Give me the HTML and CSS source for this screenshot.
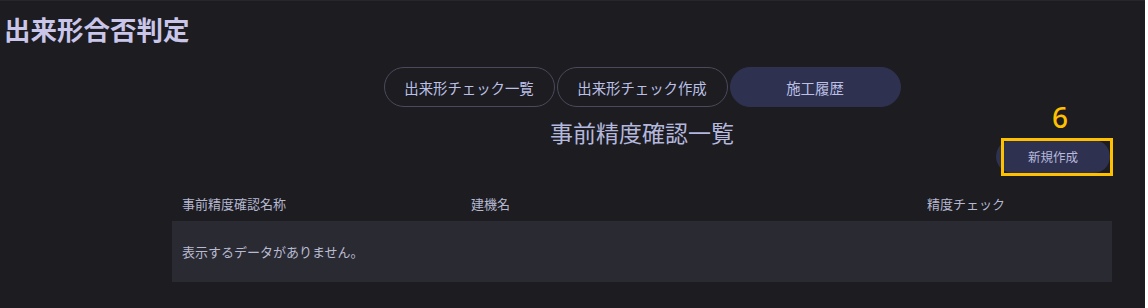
FILE: index.html
```html
<!DOCTYPE html>
<html lang="ja">
<head>
    <meta charset="UTF-8">
    <meta name="viewport" content="width=device-width, initial-scale=1.0">
    <title>出来形合否判定</title>
    <link rel="stylesheet" href="styles.css">
</head>
<body>
    <div class="app">
        <h1 class="page-title">出来形合否判定</h1>

        <div class="content">
            <div class="tabs">
                <button type="button" class="tab">出来形チェック一覧</button>
                <button type="button" class="tab">出来形チェック作成</button>
                <button type="button" class="tab active">施工履歴</button>
            </div>

            <div class="toolbar">
                <div></div>
                <h2 class="section-title">事前精度確認一覧</h2>
                <div class="toolbar-right">
                    <div class="new-wrap">
                        <span class="mark-num">6</span>
                        <button type="button" class="new-button">新規作成</button>
                        <span class="mark-box"></span>
                    </div>
                </div>
            </div>

            <table class="list">
                <thead>
                    <tr>
                        <th class="col-name">事前精度確認名称</th>
                        <th class="col-machine">建機名</th>
                        <th class="col-check">精度チェック</th>
                    </tr>
                </thead>
                <tbody>
                    <tr class="empty">
                        <td colspan="3">表示するデータがありません。</td>
                    </tr>
                </tbody>
            </table>
        </div>
    </div>
</body>
</html>
```

FILE: styles.css
```css
body {
    margin: 0;
    padding: 0;
    background-color: #ffffff;
    font-family: "Noto Sans CJK JP", "Noto Sans", sans-serif;
}
.app {
    width: 1145px;
    height: 308px;
    box-sizing: border-box;
    background-color: #1c1c21;
    border-top: 1px solid #26262c;
    padding-top: 13px;
    overflow: hidden;
}
.page-title {
    margin: 0 0 0 4px;
    font-size: 26.5px;
    line-height: 30px;
    font-weight: bold;
    color: #c9c6ea;
}
.content {
    margin-left: 172px;
    width: 940px;
}
.tabs {
    display: flex;
    justify-content: center;
    gap: 2px;
    margin-top: 23px;
}
.tab {
    width: 171px;
    height: 40px;
    border: 1px solid #4a4a5c;
    border-radius: 20px;
    background-color: transparent;
    color: #bcc0e6;
    font-family: inherit;
    font-size: 14.4px;
    cursor: pointer;
}
.tab.active {
    background-color: #2e3250;
    border-color: #2e3250;
}
.toolbar {
    display: grid;
    grid-template-columns: 1fr auto 1fr;
    height: 67px;
    margin-top: 11px;
}
.section-title {
    margin: 0;
    font-size: 23px;
    line-height: 29px;
    font-weight: normal;
    color: #b3b8dc;
}
.toolbar-right {
    display: flex;
    justify-content: flex-end;
    align-items: flex-start;
}
.new-wrap {
    position: relative;
    margin-top: 22px;
    margin-right: 2px;
}
.new-button {
    display: block;
    width: 114px;
    height: 33px;
    border: none;
    border-radius: 17px;
    background-color: #2e3250;
    color: #b6b9dc;
    font-family: inherit;
    font-size: 12.5px;
    cursor: pointer;
}
/* 注釈 */
.mark-num {
    position: absolute;
    left: 56px;
    top: -40px;
    font-family: "Noto Sans", sans-serif;
    font-size: 28px;
    line-height: 34px;
    font-weight: 500;
    color: #ffc000;
}
.mark-box {
    position: absolute;
    left: 5px;
    top: -2px;
    width: 112px;
    height: 38px;
    box-sizing: border-box;
    border: 3px solid #ffc000;
}
.list {
    width: 100%;
    border-collapse: collapse;
}
.list th {
    height: 36px;
    padding: 0 10px;
    text-align: left;
    font-size: 13px;
    font-weight: normal;
    color: #b5b8d0;
}
.col-name {
    width: 269px;
}
.col-machine {
    width: 436px;
}
.list td {
    height: 61px;
    padding: 0 10px;
    background-color: #2a2a33;
    font-size: 13px;
    color: #b8bad0;
}
```
